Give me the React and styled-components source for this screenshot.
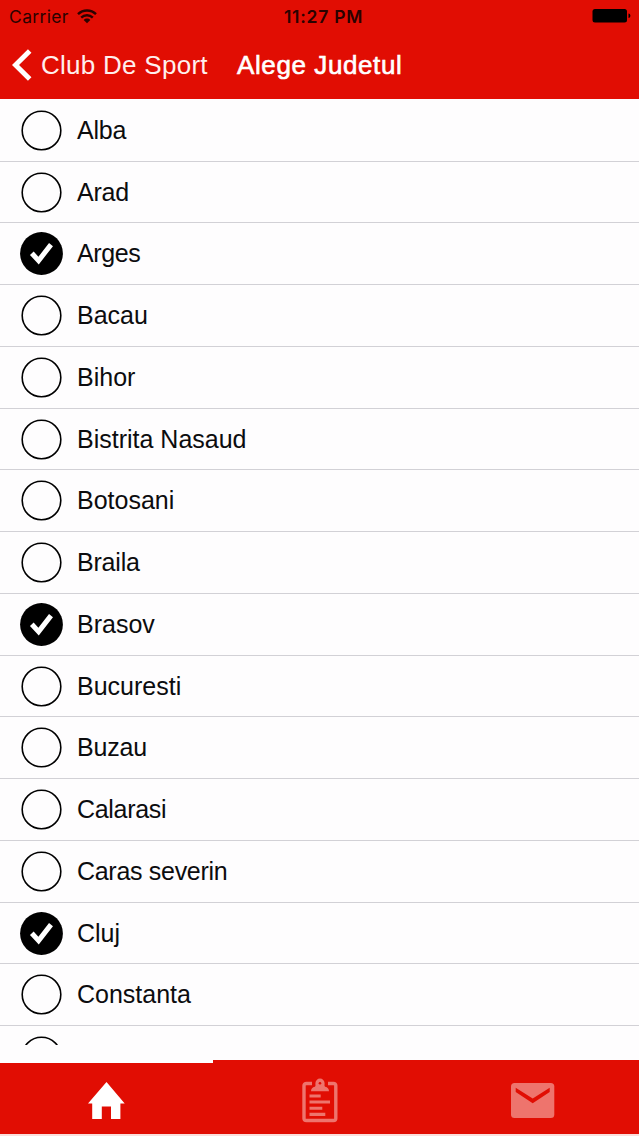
import React from 'react';
import styled, { createGlobalStyle } from 'styled-components';

const GlobalStyle = createGlobalStyle`
  * {
    box-sizing: border-box;
  }
  body {
    margin: 0;
    background: #fff;
    font-family: 'Liberation Sans', Arial, sans-serif;
  }
`;

let Screen = styled.div`
  display: flex;
  flex-direction: column;
  width: 639px;
  height: 1136px;
  overflow: hidden;
  background: #fefdfe;
`;

let Header = styled.header`
  flex: none;
  height: 98.5px;
  background: #e10d03;
`;

let StatusBar = styled.div`
  display: grid;
  grid-template-columns: 1fr auto 1fr;
  align-items: center;
  height: 32px;
  padding: 0 7px 0 9px;
  color: #2a0200;
`;

let Carrier = styled.div`
  display: flex;
  align-items: center;
  gap: 8px;
  font-family: Inter, sans-serif;
  font-size: 17.5px;
  letter-spacing: 0.35px;
`;

let Clock = styled.div`
  padding-left: 6px;
  font-family: Inter, sans-serif;
  font-size: 17.5px;
  font-weight: 600;
  letter-spacing: 0.75px;
`;

let BatteryIcon = styled.svg`
  justify-self: end;
`;

let NavBar = styled.div`
  display: flex;
  align-items: center;
  height: 66px;
  padding-left: 12px;
  color: #fff;
  font-size: 26px;
`;

let BackButton = styled.button`
  display: flex;
  align-items: center;
  gap: 9px;
  width: 225px;
  padding: 0;
  border: 0;
  background: none;
  color: #ffefed;
  font: inherit;
  letter-spacing: 0.27px;
  white-space: nowrap;
`;

let Title = styled.h1`
  margin: 0;
  font-size: 26px;
  font-weight: 400;
  letter-spacing: 0.6px;
  -webkit-text-stroke: 0.6px #fff;
`;

let List = styled.ul`
  flex: none;
  height: 946.5px;
  margin: 0;
  padding: 1.4px 0 0;
  overflow: hidden;
  list-style: none;
`;

let Row = styled.li`
  display: flex;
  align-items: center;
  gap: 14px;
  height: 61.75px;
  padding-left: 20px;
  border-bottom: 1px solid #d2d1d6;
  color: #0c0c0e;
  font-size: 25px;
  letter-spacing: ${props => props.$spacing || 0}px;
`;

let TabBar = styled.nav`
  display: flex;
  flex: none;
  height: 74px;
  margin-top: 15px;
`;

let Tab = styled.button`
  display: flex;
  flex: 1;
  justify-content: center;
  padding: 15px 0 0;
  border: 0;
  border-top: 3px solid ${props => (props.$active ? '#fff' : '#e10d03')};
  background: #e10d03;
  color: ${props => (props.$active ? '#fff' : '#ee746d')};
`;

let BottomLine = styled.div`
  height: 2px;
  background: #fbdedc;
`;

const counties = [
  { name: 'Alba', spacing: -0.2 },
  { name: 'Arad', spacing: -0.2 },
  { name: 'Arges', checked: true, spacing: -0.4 },
  { name: 'Bacau' },
  { name: 'Bihor' },
  { name: 'Bistrita Nasaud' },
  { name: 'Botosani' },
  { name: 'Braila', spacing: -0.2 },
  { name: 'Brasov', checked: true },
  { name: 'Bucuresti' },
  { name: 'Buzau', spacing: -0.2 },
  { name: 'Calarasi', spacing: -0.3 },
  { name: 'Caras severin', spacing: -0.3 },
  { name: 'Cluj', checked: true },
  { name: 'Constanta' },
  { name: '' },
];

function Radio({ checked }) {
  return (
    <svg width="43" height="43" viewBox="0 0 43 43">
      {checked ? (
        <>
          <circle cx="21.5" cy="21.5" r="21.4" fill="#000" />
          <path d="M11.8 21.2 L18.6 28.6 L31 12.6" fill="none" stroke="#fff" strokeWidth="5" />
        </>
      ) : (
        <circle cx="21.5" cy="21.5" r="19.3" fill="none" stroke="#000" strokeWidth="1.6" />
      )}
    </svg>
  );
}

function WifiIcon() {
  return (
    <svg width="20" height="15" viewBox="0 0 20 15" fill="none" stroke="currentColor" strokeWidth="2.4">
      <path d="M1 5.2 C6 0.2 14 0.2 19 5.2" />
      <path d="M4.2 8.6 C7.4 5.4 12.6 5.4 15.8 8.6" />
      <path d="M6.7 10.9 C8.6 9 11.4 9 13.3 10.9 L10 14.2 Z" fill="currentColor" stroke="none" />
    </svg>
  );
}

function Battery() {
  return (
    <BatteryIcon width="40" height="16" viewBox="0 0 40 16">
      <rect x="0.5" y="1" width="34.5" height="13.5" rx="2.5" fill="#000" />
      <path d="M36.5 5.5 C39 6 39 9.5 36.5 10 Z" fill="#000" />
    </BatteryIcon>
  );
}

function HomeIcon() {
  return (
    <svg width="38" height="42" viewBox="0 -4 38 42" fill="currentColor">
      <path d="M18.5 0 L36.7 21.5 H32.4 V37 H23 V24.5 H13.8 V37 H4.2 V21.5 H0 Z" />
    </svg>
  );
}

function ClipboardIcon() {
  return (
    <svg width="36" height="46" viewBox="0 0 36 46" fill="none" stroke="currentColor">
      <path
        d="M10 5.5 H4.5 Q2 5.5 2 7.5 V40.5 Q2 42.5 4.5 42.5 H31.5 Q33.8 42.5 33.8 40.5 V7.5 Q33.8 5.5 31.5 5.5 H26"
        strokeWidth="3.4"
      />
      <path
        d="M9 13.3 C9 10.5 10.5 9.3 12.8 8.8 Q13.8 8 13.4 5.2 A4.6 4.6 0 0 1 22.6 5.2 Q22.2 8 23.2 8.8 C25.5 9.3 27 10.5 27 13.3 Z"
        fill="currentColor"
        stroke="none"
      />
      <circle cx="18" cy="5.2" r="1.3" fill="#e10d03" stroke="none" />
      <path d="M7.5 18 H18.7 M7.5 24 H28 M7.5 30.2 H20.3 M7.5 36.4 H23.3" strokeWidth="3.1" />
    </svg>
  );
}

function MailIcon() {
  return (
    <svg width="44" height="40" viewBox="0 0 44 40">
      <rect x="0" y="5" width="43.3" height="35" rx="3.5" fill="currentColor" />
      <path d="M4.7 9.7 L21.7 20.6 L38.7 9.7 V14 L21.7 25.3 L4.7 14 Z" fill="#e10d03" />
    </svg>
  );
}

function App() {
  return (
    <>
      <GlobalStyle />
      <Screen>
        <Header>
          <StatusBar>
            <Carrier>
              Carrier
              <WifiIcon />
            </Carrier>
            <Clock>11:27 PM</Clock>
            <Battery />
          </StatusBar>
          <NavBar>
            <BackButton>
              <svg width="20" height="32" viewBox="0 0 20 32">
                <path d="M17.7 2 L3.5 16 L17.7 30" fill="none" stroke="#fff" strokeWidth="5" />
              </svg>
              Club De Sport
            </BackButton>
            <Title>Alege Judetul</Title>
          </NavBar>
        </Header>
        <List>
          {counties.map((county, i) => (
            <Row key={i} $spacing={county.spacing}>
              <Radio checked={county.checked} />
              {county.name}
            </Row>
          ))}
        </List>
        <TabBar>
          <Tab $active>
            <HomeIcon />
          </Tab>
          <Tab>
            <ClipboardIcon />
          </Tab>
          <Tab>
            <MailIcon />
          </Tab>
        </TabBar>
        <BottomLine />
      </Screen>
    </>
  );
}

export default App;
